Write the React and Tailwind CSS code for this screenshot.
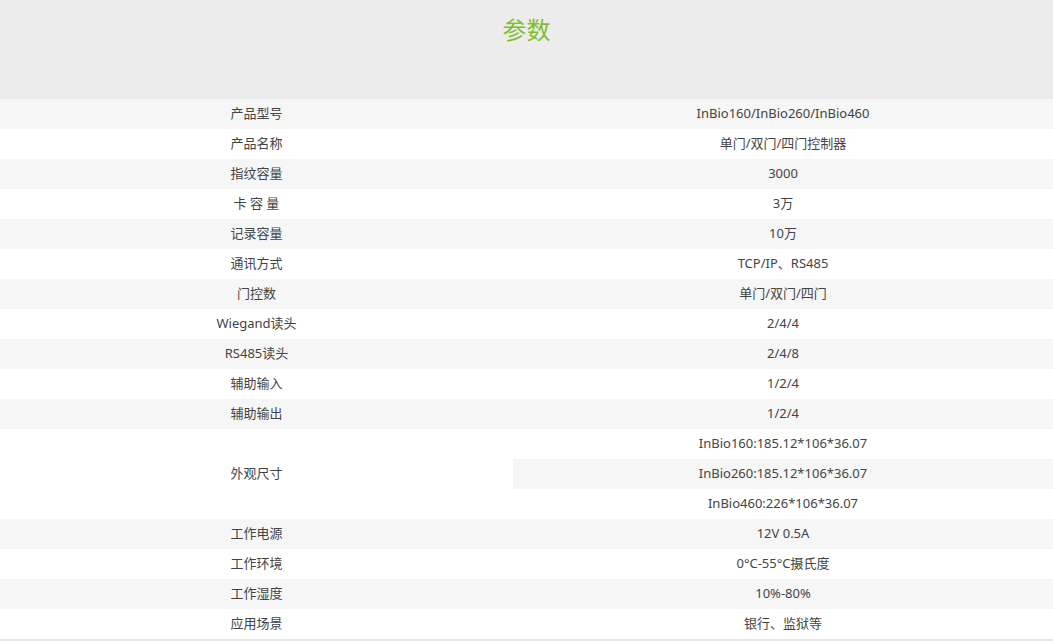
const before = [
  ['产品型号', 'InBio160/InBio260/InBio460'],
  ['产品名称', '单门/双门/四门控制器'],
  ['指纹容量', '3000'],
  ['卡 容 量', '3万'],
  ['记录容量', '10万'],
  ['通讯方式', 'TCP/IP、RS485'],
  ['门控数', '单门/双门/四门'],
  ['Wiegand读头', '2/4/4'],
  ['RS485读头', '2/4/8'],
  ['辅助输入', '1/2/4'],
  ['辅助输出', '1/2/4'],
];
const after = [
  ['工作电源', '12V 0.5A'],
  ['工作环境', '0°C-55°C摄氏度'],
  ['工作湿度', '10%-80%'],
  ['应用场景', '银行、监狱等'],
];
const sizes = ['InBio160:185.12*106*36.07', 'InBio260:185.12*106*36.07', 'InBio460:226*106*36.07'];

const Row = ({ k, v, odd }) => (
  <div className={`grid grid-cols-[513px_1fr] h-[30px] items-center text-center ${odd ? 'bg-[#f6f6f6]' : 'bg-white'}`}>
    <div>{k}</div>
    <div>{v}</div>
  </div>
);

export default function App() {
  return (
    <div className="w-[1053px] h-[641px] bg-white text-[13px] text-[#444]" style={{ fontFamily: '"Noto Sans", "Noto Sans CJK SC", sans-serif' }}>
      <div className="h-[99px] bg-[#ececec] flex justify-center pt-[14px]">
        <h1 className="text-[24px] leading-[32px] text-[#7dbf2a]">参数</h1>
      </div>
      <div className="border-b-2 border-[#e8e8e8]">
        {before.map(([k, v], i) => <Row key={k} k={k} v={v} odd={i % 2 === 0} />)}
        <div className="grid grid-cols-[513px_1fr] text-center bg-white">
          <div className="flex items-center justify-center">外观尺寸</div>
          <div>
            {sizes.map((s, i) => (
              <div key={s} className={`h-[30px] flex items-center justify-center ${i === 1 ? 'bg-[#f6f6f6]' : ''}`}>{s}</div>
            ))}
          </div>
        </div>
        {after.map(([k, v], i) => <Row key={k} k={k} v={v} odd={i % 2 === 0} />)}
      </div>
    </div>
  );
}
